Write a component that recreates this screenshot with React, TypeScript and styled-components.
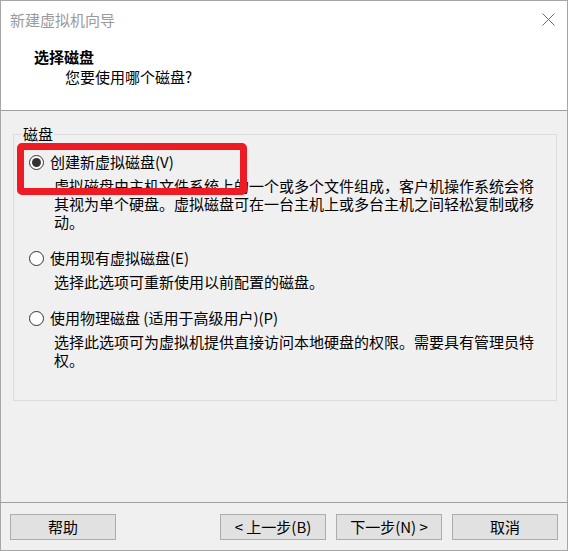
import React from "react";
import styled, { createGlobalStyle } from "styled-components";

const GlobalStyle = createGlobalStyle`
  html, body {
    margin: 0;
    padding: 0;
    background: #ffffff;
  }
  body {
    font-family: "Noto Sans CJK SC", "Liberation Sans", sans-serif;
    font-size: 15px;
    color: #000;
  }
`;

type OptionItem = {
  label: string;
  lines: string[];
  checked?: boolean;
};

const options: OptionItem[] = [
  {
    label: "创建新虚拟磁盘(V)",
    checked: true,
    lines: [
      "虚拟磁盘由主机文件系统上的一个或多个文件组成，客户机操作系统会将",
      "其视为单个硬盘。虚拟磁盘可在一台主机上或多台主机之间轻松复制或移",
      "动。",
    ],
  },
  {
    label: "使用现有虚拟磁盘(E)",
    lines: ["选择此选项可重新使用以前配置的磁盘。"],
  },
  {
    label: "使用物理磁盘 (适用于高级用户)(P)",
    lines: [
      "选择此选项可为虚拟机提供直接访问本地硬盘的权限。需要具有管理员特",
      "权。",
    ],
  },
];

const App: React.FC = () => {
  return (
    <>
      <GlobalStyle />
      <Window>
        <Header>
          <TitleBar>
            <Title>新建虚拟机向导</Title>
            <CloseIcon width="13" height="13" viewBox="0 0 13 13">
              <path d="M0.5 0.5 L12.5 12.5 M12.5 0.5 L0.5 12.5" stroke="#6e6e6e" strokeWidth="1" />
            </CloseIcon>
          </TitleBar>
          <Heading>选择磁盘</Heading>
          <SubHeading>您要使用哪个磁盘?</SubHeading>
        </Header>

        <Body>
          <Group>
            <Legend>磁盘</Legend>
            <OptionList>
              {options.map((opt) => (
                <Option key={opt.label}>
                  <OptionLabel>
                    <Radio $checked={!!opt.checked} />
                    <span>{opt.label}</span>
                  </OptionLabel>
                  <Description>
                    {opt.lines.map((line) => (
                      <div key={line}>{line}</div>
                    ))}
                  </Description>
                </Option>
              ))}
            </OptionList>
          </Group>
        </Body>

        <Footer>
          <Button>帮助</Button>
          <ButtonGroup>
            <Button>&lt; 上一步(B)</Button>
            <Button>下一步(N) &gt;</Button>
            <Button>取消</Button>
          </ButtonGroup>
        </Footer>

        <Highlight />
      </Window>
    </>
  );
};

export default App;

const Window = styled.div`
  position: relative;
  box-sizing: border-box;
  width: 568px;
  height: 551px;
  border: 1px solid #a6a6a6;
  display: flex;
  flex-direction: column;
  background: #f0f0f0;
`;

const Header = styled.div`
  background: #ffffff;
  height: 110px;
  box-sizing: border-box;
  border-bottom: 1px solid #a0a0a0;
`;

const TitleBar = styled.div`
  height: 38px;
  display: flex;
  align-items: center;
  justify-content: space-between;
  padding: 0 12px 0 9px;
`;

const Title = styled.div`
  color: #9a9a9a;
  line-height: 20px;
`;

const CloseIcon = styled.svg`
  display: block;
  margin-top: -2px;
`;

const Heading = styled.div`
  margin-top: 8px;
  padding-left: 33px;
  font-weight: bold;
  line-height: 20px;
`;

const SubHeading = styled.div`
  padding-left: 64px;
  line-height: 20px;
`;

const Body = styled.div`
  flex: 1;
  padding: 13px 0 0 12px;
`;

const Group = styled.fieldset`
  box-sizing: border-box;
  width: 544px;
  margin: 0;
  padding: 0 0 31px 0;
  border: 1px solid #dcdcdc;
`;

const Legend = styled.legend`
  margin-left: 8px;
  padding: 0 1px;
  line-height: 20px;
`;

const OptionList = styled.div`
  display: flex;
  flex-direction: column;
  gap: 17px;
  padding-top: 8px;
`;

const Option = styled.div`
  display: flex;
  flex-direction: column;
  gap: 5px;
`;

const OptionLabel = styled.div`
  display: flex;
  align-items: center;
  gap: 6px;
  padding-left: 15px;
  line-height: 20px;
  white-space: nowrap;
`;

const Radio = styled.span<{ $checked: boolean }>`
  position: relative;
  box-sizing: border-box;
  width: 15px;
  height: 15px;
  border-radius: 50%;
  border: 1px solid #333333;
  background: #ffffff;
  flex-shrink: 0;

  &::after {
    content: "";
    display: ${(p) => (p.$checked ? "block" : "none")};
    position: absolute;
    left: 2px;
    top: 2px;
    width: 9px;
    height: 9px;
    border-radius: 50%;
    background: #333333;
  }
`;

const Description = styled.div`
  padding-left: 40px;
  line-height: 18px;
  white-space: nowrap;
`;

const Footer = styled.div`
  height: 48px;
  box-sizing: border-box;
  border-top: 1px solid #a0a0a0;
  display: flex;
  justify-content: space-between;
  align-items: flex-start;
  padding: 11px 9px 0 9px;
`;

const ButtonGroup = styled.div`
  display: flex;
  gap: 10px;
`;

const Button = styled.button`
  box-sizing: border-box;
  width: 106px;
  height: 26px;
  padding: 0;
  background: #e1e1e1;
  border: 1px solid #adadad;
  border-radius: 0;
  font-family: "Noto Sans CJK SC", "Liberation Sans", sans-serif;
  font-size: 15px;
  line-height: 20px;
  color: #000;
`;

const Highlight = styled.div`
  position: absolute;
  left: 16px;
  top: 142px;
  width: 230px;
  height: 52px;
  box-sizing: border-box;
  border: 7px solid #ed1c24;
  border-radius: 5px;
  pointer-events: none;
`;
